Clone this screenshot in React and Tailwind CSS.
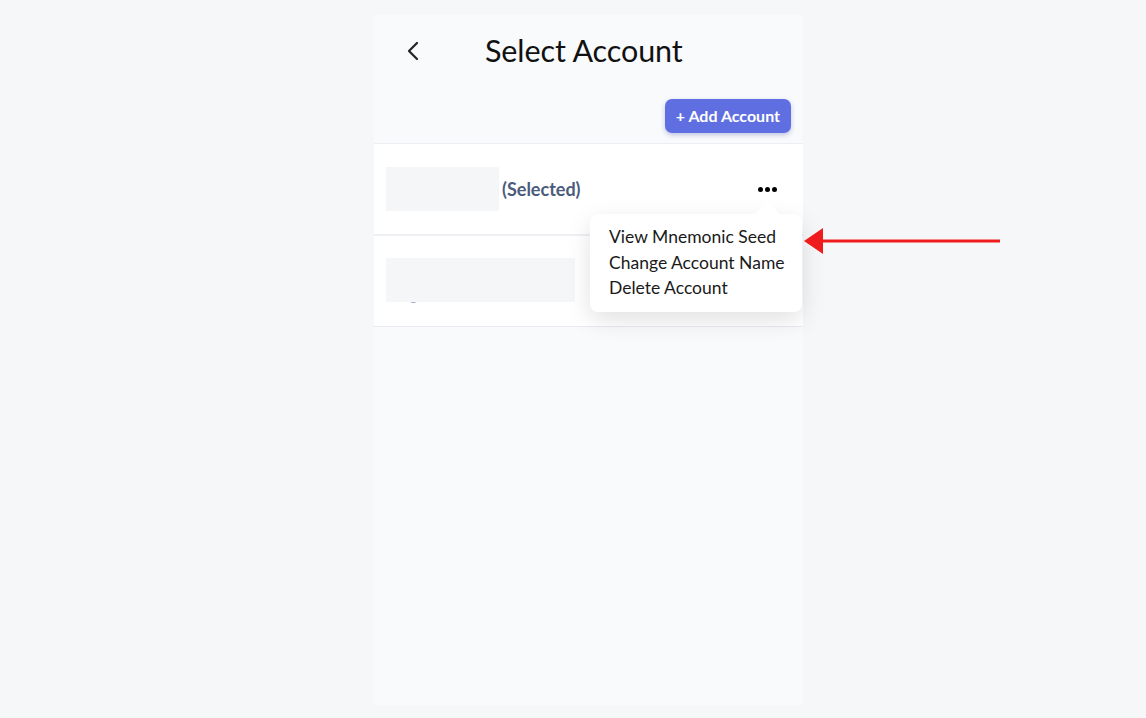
import React from "react";

export default function App() {
  return (
    <div className="relative min-h-screen w-full bg-[#f6f7f9] pt-[15px]" style={{ fontFamily: "Lato, 'Noto Sans', sans-serif" }}>
      <div className="relative ml-[374px] flex h-[690px] w-[429px] flex-col bg-[#f9fafc]">
        {/* header */}
        <div className="flex h-[72px] items-center px-[30px]">
          <svg width="16" height="22" viewBox="0 0 16 22" className="ml-[1px]">
            <path d="M12 3 L4 11 L12 19" fill="none" stroke="#222" strokeWidth="2.2" strokeLinecap="round" strokeLinejoin="round" />
          </svg>
          <div className="ml-[64px] text-[30.5px] font-normal tracking-[-0.1px] text-[#111]">Select Account</div>
        </div>
        <div className="flex justify-end px-[12px] pt-[12px] pb-[10px]">
          <button className="h-[34px] rounded-[7px] bg-[#5f6fe1] px-[11px] text-[16px] font-bold text-white shadow-[0_2px_5px_rgba(60,70,160,0.3)]">
            + Add Account
          </button>
        </div>
        <div className="border-t border-[#eceef2] bg-white">
          <div className="flex h-[92px] items-center border-b-2 border-[#eef0f3] pl-[12px] pr-[26px]">
            <div className="h-[44px] w-[113px] bg-[#f5f6f8]" />
            <div className="ml-[3px] text-[18px] font-bold text-[#4b5b7c]">(Selected)</div>
            <div className="ml-auto flex gap-[2px]">
              <span className="h-[5px] w-[5px] rounded-full bg-black" />
              <span className="h-[5px] w-[5px] rounded-full bg-black" />
              <span className="h-[5px] w-[5px] rounded-full bg-black" />
            </div>
          </div>
          <div className="relative flex h-[91px] items-center border-b border-[#e9ebef] px-[12px]">
            <div className="absolute left-[22px] top-[46px] text-[16px] text-[#a3aec2]">Ing 0ex1, 2r 5ho 4</div>
            <div className="relative -mt-[2px] h-[44px] w-[189px] bg-[#f5f6f8]" />
          </div>
        </div>
        {/* dropdown menu */}
        <div className="absolute left-[216px] top-[199px] w-[212px] whitespace-nowrap rounded-[8px] bg-white pb-[11px] pl-[19px] pt-[10px] shadow-[0_8px_24px_rgba(0,0,0,0.12)]">
          <div className="absolute -top-[13px] left-[164px] h-0 w-0 border-x-[13px] border-b-[14px] border-x-transparent border-b-white" />
          <div className="text-[17.5px] leading-[25.5px] text-[#1a1a1a]">View Mnemonic Seed</div>
          <div className="text-[17.5px] leading-[25.5px] text-[#1a1a1a]">Change Account Name</div>
          <div className="text-[17.5px] leading-[25.5px] text-[#1a1a1a]">Delete Account</div>
        </div>
      </div>
      {/* red annotation arrow */}
      <svg className="absolute left-[800px] top-[224px]" width="204" height="34" viewBox="0 0 204 34">
        <path d="M4 17 L23 4 L23 30 Z" fill="#ee1c1c" />
        <rect x="20" y="15.5" width="180" height="3" fill="#ee1c1c" />
      </svg>
    </div>
  );
}
